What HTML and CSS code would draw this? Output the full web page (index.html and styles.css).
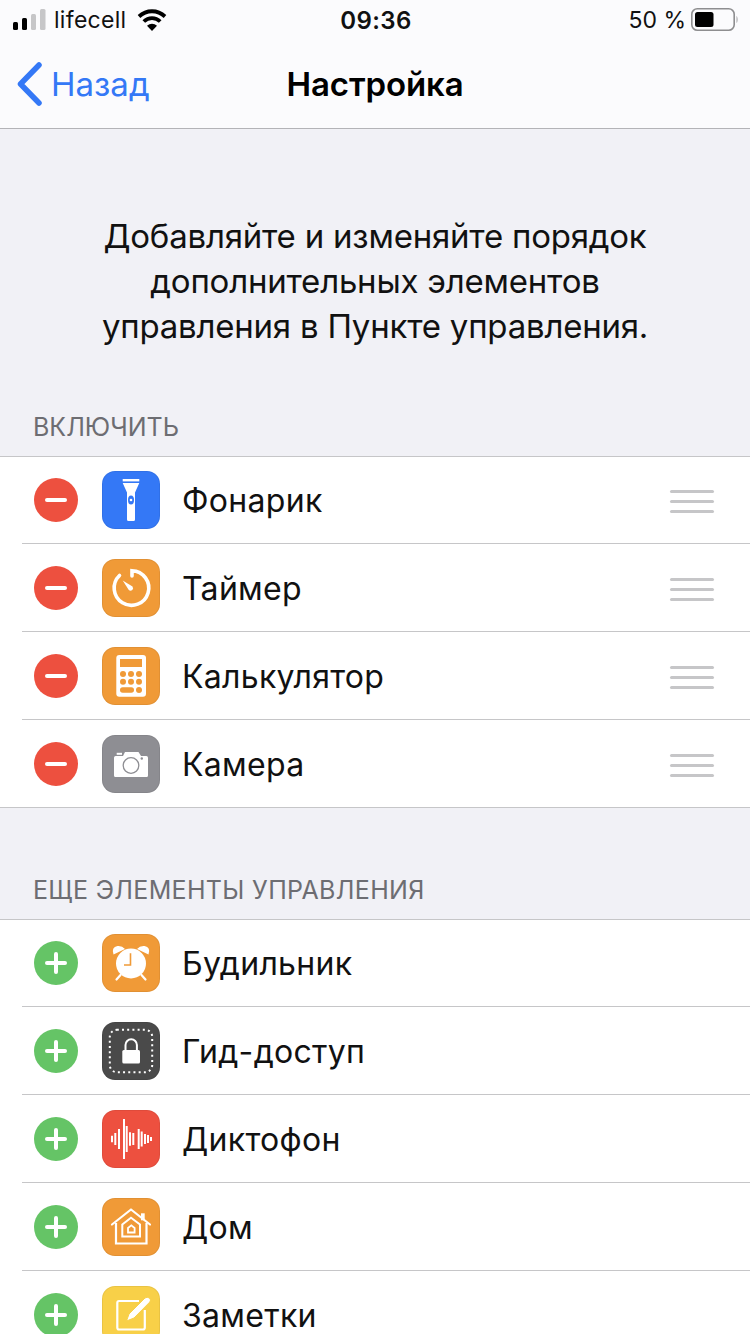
FILE: index.html
```html
<!DOCTYPE html>
<html lang="ru">
<head>
<meta charset="utf-8">
<title>Настройка</title>
<link rel="stylesheet" href="styles.css">
</head>
<body>
<header class="top">
  <div class="status">
    <div class="status-left">
      <svg class="signal" width="33" height="22" viewBox="0 0 33 22"><rect x="0" y="13" width="5" height="8" rx="1.500" fill="#000"/><rect x="9" y="9" width="5" height="12" rx="1.500" fill="#000"/><rect x="18" y="5" width="5" height="16" rx="1.500" fill="#c6c6c8"/><rect x="27" y="0" width="5.500" height="21" rx="1.500" fill="#c6c6c8"/></svg>
      <span class="carrier">lifecell</span>
      <svg class="wifi" width="30" height="24" viewBox="0 0 30 24"><path d="M2 8.500C9.500 1.500 20.500 1.500 28 8.500" fill="none" stroke="#000" stroke-width="3.800"/><path d="M6.800 13.500C11.500 9 18.500 9 23.200 13.500" fill="none" stroke="#000" stroke-width="3.800"/><path d="M15 23L10 17.800C13 15 17 15 20 17.800Z" fill="#000"/></svg>
    </div>
    <span class="time">09:36</span>
    <div class="status-right">
      <span class="percent">50 %</span>
      <svg class="battery" width="48" height="24" viewBox="0 0 48 24"><rect x="0.800" y="0.800" width="42.400" height="21.400" rx="5.500" fill="none" stroke="#8e8e90" stroke-width="1.600"/><rect x="4" y="4" width="18.500" height="15" rx="2.500" fill="#000"/><path d="M45.500 8C47 9 47 14 45.500 15Z" fill="#a5a5a7"/></svg>
    </div>
  </div>
  <nav class="nav">
    <a class="back">
      <svg class="chevron" width="26" height="44" viewBox="0 0 26 44"><path d="M23 3L4.500 22L23 41" fill="none" stroke="#3478f6" stroke-width="5.500" stroke-linecap="round" stroke-linejoin="round"/></svg>
      <span>Назад</span>
    </a>
    <h1 class="title">Настройка</h1>
  </nav>
</header>

<p class="intro">Добавляйте и изменяйте порядок дополнительных элементов управления в Пункте управления.</p>

<h2 class="section-head section-first">ВКЛЮЧИТЬ</h2>
<ul class="list">
  <li class="row">
    <span class="ctl ctl-remove"></span>
    <span class="icon icon-blue"><svg width="58" height="58" viewBox="0 0 58 58"><rect x="20.700" y="8" width="16.600" height="2.400" fill="#fff"/><path d="M20.700 12H37.300L33 21.500V48.500Q33 50 31.500 50H26.500Q25 50 25 48.500V21.500Z" fill="#fff"/><ellipse cx="29" cy="29" rx="3" ry="4.500" fill="#3478f6"/><circle cx="29" cy="29" r="1.300" fill="#fff"/></svg></span>
    <span class="label">Фонарик</span>
    <span class="grip"><i></i><i></i><i></i></span>
  </li>
  <li class="row">
    <span class="ctl ctl-remove"></span>
    <span class="icon icon-orange"><svg width="58" height="58" viewBox="0 0 58 58"><path d="M30 17V11.700A17.300 17.300 0 1 1 17.500 16.500" fill="none" stroke="#fff" stroke-width="3.600" stroke-linecap="round"/><path d="M20.700 21.500L30.500 27.500Q31.800 29.500 30.300 31Q28.500 32.300 26.800 31Z" fill="#fff"/></svg></span>
    <span class="label">Таймер</span>
    <span class="grip"><i></i><i></i><i></i></span>
  </li>
  <li class="row">
    <span class="ctl ctl-remove"></span>
    <span class="icon icon-orange"><svg width="58" height="58" viewBox="0 0 58 58"><rect x="14.300" y="8" width="29.700" height="41.700" rx="3" fill="#fff"/><g fill="#f09a37"><rect x="18" y="12" width="22" height="8"/><circle cx="21" cy="27" r="3"/><circle cx="29" cy="27" r="3"/><circle cx="37" cy="27" r="3"/><circle cx="21" cy="34.800" r="3"/><circle cx="29" cy="34.800" r="3"/><circle cx="37" cy="34.800" r="3"/><rect x="18" y="40.300" width="14" height="5.400" rx="2.700"/><circle cx="37" cy="43" r="3"/></g></svg></span>
    <span class="label">Калькулятор</span>
    <span class="grip"><i></i><i></i><i></i></span>
  </li>
  <li class="row">
    <span class="ctl ctl-remove"></span>
    <span class="icon icon-gray"><svg width="58" height="58" viewBox="0 0 58 58"><path d="M12 22.700Q12 21 13.700 21H21L23 17H36.500L39 21H44.300Q46 21 46 22.700V40.500Q46 42 44.500 42H13.500Q12 42 12 40.500Z" fill="#fff"/><rect x="14.700" y="17.800" width="5.300" height="2" fill="#fff"/><circle cx="29" cy="30.500" r="7.800" fill="none" stroke="#8e8e93" stroke-width="1.300"/><circle cx="39.800" cy="23.500" r="1.200" fill="#8e8e93"/></svg></span>
    <span class="label">Камера</span>
    <span class="grip"><i></i><i></i><i></i></span>
  </li>
</ul>

<h2 class="section-head section-second">ЕЩЕ ЭЛЕМЕНТЫ УПРАВЛЕНИЯ</h2>
<ul class="list">
  <li class="row">
    <span class="ctl ctl-add"></span>
    <span class="icon icon-orange"><svg width="58" height="58" viewBox="0 0 58 58"><path d="M11.500 20.500Q9 13 15.500 12Q20 11.500 23 15Z M46.500 20.500Q49 13 42.500 12Q38 11.500 35 15Z" fill="#fff"/><circle cx="29" cy="29.500" r="15" fill="#fff"/><path d="M18.500 41L14.500 45.500M39.500 41L43.500 45.500" stroke="#fff" stroke-width="2.200" stroke-linecap="round"/><path d="M28.500 19.300V31H22" fill="none" stroke="#f09a37" stroke-width="1.600"/></svg></span>
    <span class="label">Будильник</span>
  </li>
  <li class="row">
    <span class="ctl ctl-add"></span>
    <span class="icon icon-dark"><svg width="58" height="58" viewBox="0 0 58 58"><rect x="7.800" y="7.800" width="42.400" height="42.400" rx="7" fill="none" stroke="#fff" stroke-width="2" stroke-dasharray="2 3.200"/><rect x="20.300" y="28" width="17.700" height="13.500" rx="1.500" fill="#fff"/><path d="M23.500 28.500V23A5.700 5.700 0 0 1 34.900 23V28.500" fill="none" stroke="#fff" stroke-width="2"/></svg></span>
    <span class="label">Гид-доступ</span>
  </li>
  <li class="row">
    <span class="ctl ctl-add"></span>
    <span class="icon icon-red"><svg width="58" height="58" viewBox="0 0 58 58"><path stroke="#fff" stroke-width="2" d="M10 25.700V32.300M13.300 23V35M17 19V39M22 9V49M24.700 16V42M28 22.300V35.700M31.300 23V35M36.700 19V39M39.700 21.500V36.500M43 24V34M46 25V33M49 27V31"/></svg></span>
    <span class="label">Диктофон</span>
  </li>
  <li class="row">
    <span class="ctl ctl-add"></span>
    <span class="icon icon-orange"><svg width="58" height="58" viewBox="0 0 58 58"><path d="M10 26.500L29 11.500L48 26.500" fill="none" stroke="#fff" stroke-width="2.200" stroke-linecap="round" stroke-linejoin="round"/><rect x="39" y="15.300" width="3.700" height="7" fill="#fff"/><path d="M14 25V45.500H44.500V25" fill="none" stroke="#fff" stroke-width="2.200"/><path d="M20.300 26.500L29 19.800L38 26.500V38.500H20.300Z" fill="none" stroke="#fff" stroke-width="2"/><path d="M26 30L29.300 27.400L32.600 30V34.500H26Z" fill="none" stroke="#fff" stroke-width="1.800"/></svg></span>
    <span class="label">Дом</span>
  </li>
  <li class="row">
    <span class="ctl ctl-add"></span>
    <span class="icon icon-yellow"><svg width="58" height="58" viewBox="0 0 58 58"><path d="M37 15H17Q15.300 15 15.300 17V41.500Q15.300 43.500 17 43.500H41Q42.800 43.500 42.800 41.500V24" fill="none" stroke="#fff" stroke-width="2.200"/><path d="M24.500 35L27 28L43 12Q45 10.500 47.500 12Q49.500 14 47.800 16L32 32Z" fill="#fff" stroke="#f8d048" stroke-width="1"/></svg></span>
    <span class="label">Заметки</span>
  </li>
</ul>
</body>
</html>
```
FILE: styles.css
```css
* { box-sizing: border-box; }
html, body { margin: 0; padding: 0; }
body {
  width: 750px;
  height: 1334px;
  overflow: hidden;
  background: #f1f1f6;
  color: #000;
  font-family: Inter, "Noto Sans", "Liberation Sans", sans-serif;
}
.top {
  height: 129px;
  background: #fbfbfd;
  border-bottom: 1px solid #b3b3b7;
}
.status {
  height: 40px;
  display: grid;
  grid-template-columns: 1fr auto 1fr;
  align-items: center;
  padding: 0 11px 0 13px;
}
.status-left { display: flex; align-items: center; }
.signal { margin-right: 8px; }
.carrier { font-size: 23px; letter-spacing: 0.3px; color: #111; margin-right: 11px; }
.time { font-size: 24px; font-weight: 600; letter-spacing: 0.4px; color: #111; }
.status-right { display: flex; justify-content: flex-end; align-items: center; gap: 5px; }
.percent { font-size: 23px; color: #111; }
.nav {
  height: 88px;
  display: flex;
  align-items: center;
  justify-content: center;
  position: relative;
}
.back {
  position: absolute;
  left: 16px;
  top: 0;
  bottom: 0;
  display: flex;
  align-items: center;
  gap: 9px;
  color: #3478f6;
  font-size: 33px;
}
.title {
  margin: 0;
  font-size: 33px;
  font-weight: 600;
  letter-spacing: -0.1px;
}
.intro {
  margin: 0;
  padding: 85px 90px 0;
  height: 232px;
  font-size: 33px;
  letter-spacing: -0.22px;
  line-height: 45px;
  text-align: center;
  color: #111;
}
.section-head {
  margin: 0;
  padding-left: 33px;
  font-size: 25px;
  font-weight: 400;
  line-height: 30px;
  color: #6d6d72;
}
.section-first { height: 95px; padding-top: 51px; }
.section-second { height: 111px; padding-top: 67px; letter-spacing: 0.33px; }
.list {
  margin: 0;
  padding: 0;
  list-style: none;
  background: #fff;
  border-top: 1px solid #c6c6c8;
}
.row {
  height: 88px;
  display: flex;
  align-items: center;
  padding: 1px 0 1px 34px;
  position: relative;
}
.row:first-child { height: 87px; padding-top: 0; }
.row::after {
  content: "";
  position: absolute;
  left: 22px;
  right: 0;
  bottom: 0;
  height: 1px;
  background: #c6c6c8;
}
.row:last-child::after { left: 0; }
.ctl {
  width: 44px;
  height: 44px;
  border-radius: 50%;
  position: relative;
  flex: none;
}
.ctl::before, .ctl-add::after {
  content: "";
  position: absolute;
  left: 11px;
  top: 20px;
  width: 22px;
  height: 4px;
  border-radius: 2px;
  background: #fff;
}
.ctl-add::after { left: 20px; top: 11px; width: 4px; height: 22px; }
.ctl-remove { background: #ed503f; }
.ctl-add { background: #65c466; }
.icon {
  width: 58px;
  height: 58px;
  border-radius: 13px;
  margin-left: 24px;
  flex: none;
  display: block;
  box-shadow: inset 0 0 0 1px rgba(0, 0, 0, 0.06);
}
.icon svg { display: block; }
.icon-blue { background: #3478f6; }
.icon-orange { background: #f09a37; }
.icon-gray { background: #8e8e93; }
.icon-dark { background: #4a4a4a; }
.icon-red { background: #ed503f; }
.icon-yellow { background: #f8d048; }
.label {
  margin-left: 22px;
  font-size: 32px;
  letter-spacing: 0.3px;
  flex: 1;
  color: #111;
}
.grip {
  width: 44px;
  margin: 3px 36px 0 0;
  display: flex;
  flex-direction: column;
  gap: 7px;
}
.grip i {
  display: block;
  height: 3px;
  border-radius: 1.500px;
  background: #c6c6c8;
}
```
